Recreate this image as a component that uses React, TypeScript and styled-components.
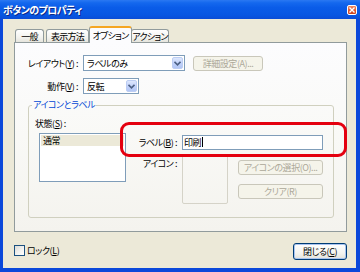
import React from "react";
import styled, { createGlobalStyle, css } from "styled-components";

const GlobalStyle = createGlobalStyle`
  html, body {
    margin: 0;
    padding: 0;
    background: #ffffff;
  }
  body {
    font-family: "Noto Sans CJK JP", "Noto Sans", sans-serif;
    font-size: 9px;
    line-height: 11px;
    letter-spacing: -0.45px;
    font-feature-settings: "palt";
    color: #000000;
  }
`;

const Window = styled.div`
  position: relative;
  width: 360px;
  height: 272px;
  box-sizing: border-box;
  background: #0b48da;
  display: flex;
  flex-direction: column;
`;

const TitleBar = styled.div`
  height: 19px;
  display: flex;
  align-items: center;
  justify-content: space-between;
  padding: 0 3px;
  background: linear-gradient(
    180deg,
    #2a78f2 0%,
    #1468ee 15%,
    #0a5ce8 40%,
    #0756e2 80%,
    #0a4cd6 100%
  );
`;

const Title = styled.span`
  color: #ffffff;
  font-weight: 700;
  font-size: 10px;
  text-shadow: 1px 1px 0 #0a2a8a;
  letter-spacing: -0.6px;
`;

const CloseBox = styled.div`
  width: 10px;
  height: 10px;
  box-sizing: border-box;
  border: 1px solid #ffffff;
  border-radius: 2px;
  background: linear-gradient(180deg, #f08a62 0%, #e0552c 60%, #c8421e 100%);
  display: flex;
  align-items: center;
  justify-content: center;
`;

const Body = styled.div`
  flex: 1;
  margin: 0 4px 4px 3px;
  background: #ece9d8;
  padding: 8px 9px 0 11px;
  display: flex;
  flex-direction: column;
`;

const TabStrip = styled.div`
  height: 15px;
  display: flex;
  align-items: flex-end;
  position: relative;
  z-index: 2;
`;

const Tab = styled.div<{ $w: number; $ml: number; $active?: boolean }>`
  width: ${(p) => p.$w}px;
  margin-left: ${(p) => p.$ml}px;
  height: 13px;
  box-sizing: border-box;
  border: 1px solid #919b9c;
  border-bottom: none;
  border-radius: 3px 3px 0 0;
  background: linear-gradient(180deg, #ffffff 0%, #f3f3ef 60%, #e6e5dd 100%);
  display: flex;
  align-items: center;
  justify-content: center;
  white-space: nowrap;
  letter-spacing: -0.75px;
  ${(p) =>
    p.$active &&
    css`
      height: 17px;
      margin-bottom: -1px;
      border-top: 2px solid #f5a623;
      background: #fcfcfe;
      padding-bottom: 1px;
      position: relative;
      z-index: 1;
    `}
`;

const Panel = styled.div`
  height: 190px;
  box-sizing: border-box;
  border: 1px solid #919b9c;
  background: linear-gradient(180deg, #fcfcfe 0%, #f9f9f6 50%, #f4f3ee 100%);
  padding-top: 12px;
  display: flex;
  flex-direction: column;
`;

const Row = styled.div<{ $mt?: number }>`
  display: flex;
  align-items: center;
  height: 16px;
  margin-top: ${(p) => p.$mt ?? 0}px;
`;

const FieldLabel = styled.div<{ $w: number }>`
  width: ${(p) => p.$w}px;
  margin-right: 5px;
  text-align: right;
  white-space: nowrap;
`;

const Key = styled.span`
  text-decoration: underline;
`;

const Combo = styled.div<{ $w: number }>`
  width: ${(p) => p.$w}px;
  height: 16px;
  box-sizing: border-box;
  border: 1px solid #7f9db9;
  background: #ffffff;
  display: flex;
  align-items: center;
  justify-content: space-between;
  padding: 1px;
`;

const ComboText = styled.span`
  padding-left: 2px;
`;

const DropButton = styled.div`
  width: 11px;
  height: 100%;
  box-sizing: border-box;
  border: 1px solid #bccdf3;
  border-radius: 2px;
  background: linear-gradient(180deg, #dde7fd 0%, #c3d3fb 50%, #b2c6f5 100%);
  display: flex;
  align-items: center;
  justify-content: center;
`;

const DisabledButton = styled.div<{ $w: number; $ml?: number }>`
  width: ${(p) => p.$w}px;
  margin-left: ${(p) => p.$ml ?? 0}px;
  height: 15px;
  box-sizing: border-box;
  border: 1px solid #c9c7ba;
  border-radius: 3px;
  background: #f5f4ea;
  color: #aca899;
  display: flex;
  align-items: center;
  justify-content: center;
  white-space: nowrap;
`;

const Group = styled.fieldset`
  margin: 6px 0 0 13px;
  padding: 0;
  width: 306px;
  height: 118px;
  box-sizing: border-box;
  border: 1px solid #d0d0bf;
  border-radius: 3px;
  min-width: 0;
`;

const Legend = styled.legend`
  margin-left: 3px;
  padding: 0 1px;
  line-height: 10px;
  color: #0046d5;
`;

const GroupBody = styled.div`
  display: flex;
`;

const LeftCol = styled.div`
  width: 99px;
  padding-top: 8px;
  display: flex;
  flex-direction: column;
`;

const StateLabel = styled.div`
  margin-left: 6px;
`;

const ListBox = styled.div`
  margin: 4px 0 0 10px;
  width: 87px;
  height: 49px;
  box-sizing: border-box;
  border: 1px solid #7f9db9;
  background: #ffffff;
  padding: 1px;
`;

const ListItem = styled.div<{ $selected?: boolean }>`
  height: 11px;
  padding-left: 2px;
  line-height: 11px;
  background: ${(p) => (p.$selected ? "#ece9d8" : "transparent")};
`;

const RightCol = styled.div`
  padding-top: 24px;
  display: flex;
  flex-direction: column;
`;

const TextField = styled.div`
  width: 141px;
  height: 15px;
  box-sizing: border-box;
  border: 1px solid #7f9db9;
  background: #ffffff;
  display: flex;
  align-items: center;
  padding-left: 1px;
`;

const Caret = styled.span`
  width: 1px;
  height: 10px;
  background: #000000;
  margin-left: 1px;
`;

const IconRow = styled.div`
  margin-top: 4px;
  display: flex;
  align-items: flex-start;
`;

const IconLabel = styled(FieldLabel)`
  padding-top: 4px;
`;

const IconBox = styled.div`
  width: 46px;
  height: 50px;
  box-sizing: border-box;
  border: 1px solid #d5d3c8;
  border-radius: 2px;
`;

const ButtonCol = styled.div`
  margin-left: 10px;
  padding-top: 6px;
  display: flex;
  flex-direction: column;
  gap: 9px;
`;

const BottomBar = styled.div`
  margin-top: 11px;
  display: flex;
  align-items: center;
  justify-content: space-between;
`;

const CheckRow = styled.label`
  display: flex;
  align-items: center;
  gap: 2px;
  margin-top: -2px;
`;

const CheckBox = styled.span`
  width: 11px;
  height: 11px;
  box-sizing: border-box;
  border: 1px solid #1c5180;
  background: linear-gradient(135deg, #dcdcd7 0%, #f4f4f2 60%, #ffffff 100%);
`;

const CloseButton = styled.div`
  width: 54px;
  height: 17px;
  box-sizing: border-box;
  border: 1px solid #003c74;
  border-radius: 3px;
  background: linear-gradient(180deg, #ffffff 0%, #f4f4f0 60%, #e3e2da 100%);
  box-shadow: inset 0 0 0 1px #a9c4f0;
  display: flex;
  align-items: center;
  justify-content: center;
`;

const Annotation = styled.div`
  position: absolute;
  left: 120px;
  top: 122px;
  width: 227px;
  height: 35px;
  box-sizing: border-box;
  border: 3px solid #e4000f;
  border-radius: 9px;
  pointer-events: none;
`;

const Chevron = () => (
  <svg width="7" height="5" viewBox="0 0 7 5">
    <path d="M0.5 0.8 L3.5 3.8 L6.5 0.8" fill="none" stroke="#4d6185" strokeWidth="1.6" />
  </svg>
);

const CloseX = () => (
  <svg width="6" height="6" viewBox="0 0 6 6">
    <path d="M0.5 0.5 L5.5 5.5 M5.5 0.5 L0.5 5.5" stroke="#ffffff" strokeWidth="1.4" />
  </svg>
);

const tabs = [
  { label: "一般", w: 29, ml: 1 },
  { label: "表示方法", w: 43, ml: 2 },
  { label: "オプション", w: 43, ml: 0, active: true },
  { label: "アクション", w: 38, ml: -1 },
];

export default function App() {
  return (
    <>
      <GlobalStyle />
      <Window>
        <TitleBar>
          <Title>ボタンのプロパティ</Title>
          <CloseBox>
            <CloseX />
          </CloseBox>
        </TitleBar>
        <Body>
          <TabStrip>
            {tabs.map((t) => (
              <Tab key={t.label} $w={t.w} $ml={t.ml} $active={t.active}>
                {t.label}
              </Tab>
            ))}
          </TabStrip>
          <Panel>
            <Row>
              <FieldLabel $w={63}>
                レイアウト(<Key>Y</Key>) :
              </FieldLabel>
              <Combo $w={102}>
                <ComboText>ラベルのみ</ComboText>
                <DropButton>
                  <Chevron />
                </DropButton>
              </Combo>
              <DisabledButton $w={70} $ml={8}>
                詳細設定(A)...
              </DisabledButton>
            </Row>
            <Row $mt={7}>
              <FieldLabel $w={63}>
                動作(<Key>V</Key>) :
              </FieldLabel>
              <Combo $w={56}>
                <ComboText>反転</ComboText>
                <DropButton>
                  <Chevron />
                </DropButton>
              </Combo>
            </Row>
            <Group>
              <Legend>アイコンとラベル</Legend>
              <GroupBody>
                <LeftCol>
                  <StateLabel>
                    状態(<Key>S</Key>) :
                  </StateLabel>
                  <ListBox>
                    <ListItem $selected>通常</ListItem>
                  </ListBox>
                </LeftCol>
                <RightCol>
                  <Row>
                    <FieldLabel $w={49}>
                      ラベル(<Key>B</Key>) :
                    </FieldLabel>
                    <TextField>
                      印刷
                      <Caret />
                    </TextField>
                  </Row>
                  <IconRow>
                    <IconLabel $w={49}>アイコン :</IconLabel>
                    <IconBox />
                    <ButtonCol>
                      <DisabledButton $w={85}>アイコンの選択(O)...</DisabledButton>
                      <DisabledButton $w={85}>クリア(R)</DisabledButton>
                    </ButtonCol>
                  </IconRow>
                </RightCol>
              </GroupBody>
            </Group>
          </Panel>
          <BottomBar>
            <CheckRow>
              <CheckBox />
              <span>
                ロック(<Key>L</Key>)
              </span>
            </CheckRow>
            <CloseButton>
              閉じる(<Key>C</Key>)
            </CloseButton>
          </BottomBar>
        </Body>
        <Annotation />
      </Window>
    </>
  );
}
